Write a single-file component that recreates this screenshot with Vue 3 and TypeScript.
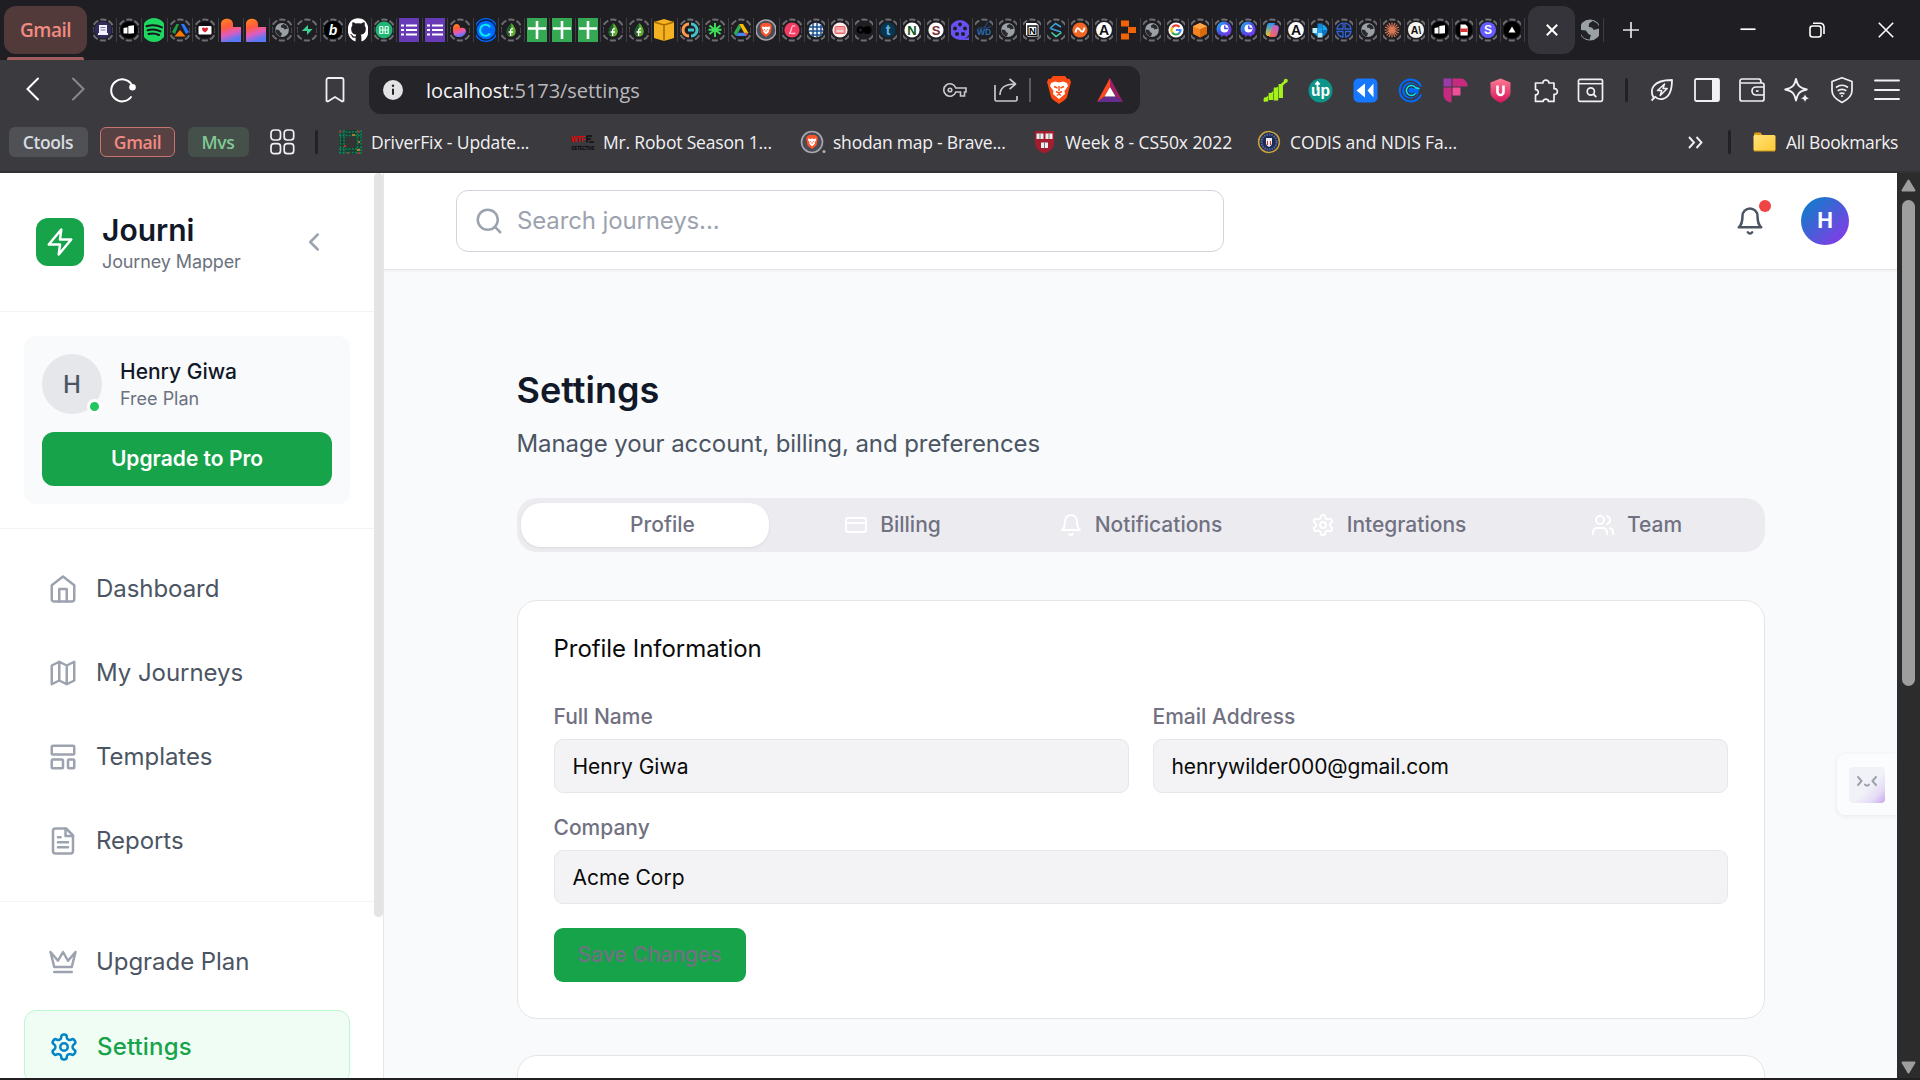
<script setup lang="ts">
interface Glyph { art: string; ring?: boolean }
interface NavItem { label: string; icon: string }
interface Bookmark { label: string; art: string; width: number; spacing: number }

const F = 'font-family="Liberation Sans, sans-serif" font-weight="700" text-anchor="middle"'
const disc = (c: string, r = 7.6) => `<circle cx="12" cy="12" r="${r}" fill="${c}"/>`
const heart = (s: string) => `<path d="${s}" fill="url(#lv)"/>`
const globe = '<circle cx="12" cy="12" r="6.900" fill="#9aa0a6"/><path d="M5.500 11.500l3.500.5 1.500 2.500 1.500.5-1 3.500c-3-.5-5.500-3-5.500-7z" fill="#2a2a2e"/><path d="M11 7.500l2.500-1.500 3 1.500 1.500 3-3.500 1-1-1.500-2.500-.5z" fill="#2a2a2e"/>'
const leaf = '<path d="M12.500 5c5 6 5 9 3 12-2 2-6 2-7 0-2-3 0-7 4-12z" fill="#5fae2e"/><path d="M12.500 5c-5 5-6 9-4 12l3 1.500z" fill="#1d5e2d"/><path d="M11.500 18v-5c0-2 1-2.500 2.500-2.300M9.500 14h4.500" stroke="#fff" stroke-width="1.300" fill="none"/>'
const sheet = '<path d="M2 0h20v24H2z" fill="#34a853"/><path d="M12 3v18M3 10.500h18" stroke="#fff" stroke-width="2.600"/>'
const list = '<path d="M2 0h20v24H2z" fill="#673ab7"/><path d="M9 7.500h11M9 12h11M9 16.500h11M4 7.500h3M4 12h3M4 16.500h3" stroke="#fff" stroke-width="2.200"/>'
const lion = '<path d="M7.500 6l1.500-1h6l1.500 1 1.300 1.500L17 14c-.5 2-3 3.500-5 5-2-1.500-4.500-3-5-5L6.200 7.500z" fill="#fb542b"/><path d="M8 8.500l2.500.5L12 8.500l1.500.5 2.500-.5.300 1.500-1.600 2.500.3 1.300L12 16.500l-2.700-2.700.3-1.300L8 10z" fill="#fff"/><path d="M10 11.300l1 .5M14 11.300l-1 .5M12 12v2" stroke="#fb542b" stroke-width=".8"/>'
const octo = '<path d="M4.500 11a7.500 7.500 0 0 1 15 0c0 3-1 4-1.500 5.500l-2 .5-1.200 2-1.800-1.500h-2L9.700 19l-1.200-2-2-.5C6 15 4.500 14 4.500 11z" fill="url(#oc)"/><circle cx="12.500" cy="10.500" r="4" fill="#fff"/><path d="M12.800 7.500v3h3" stroke="#4b49e8" stroke-width="1.400" fill="none"/>'
const letterA = disc('#fff', 7.900) + `<text x="12" y="17" font-size="14" fill="#111" ${F}>A</text>`
const windows = disc('#000', 8.500) + '<path d="M6.500 10l4-.8v6.300h-4z" fill="#fff"/><path d="M11.300 8l5.700-.8v8l-5.700.5z" fill="#fff"/>'

const wideTabs: Glyph[] = [
  { ring: true, art: disc('#302d5c', 8.500) + '<path d="M8 7h8v8h1v2H7v-2h1z" fill="#f4f2ff"/><path d="M9.500 9.500h5M9.500 12h5" stroke="#77749b"/>' },
  { ring: true, art: windows },
  { art: disc('#1ed760', 12) + '<path d="M4.500 8.200c5-1.600 11-1.100 15.500 1.200M5.500 12.200c4.500-1.300 9-.9 13 1.200M6.500 16c3.500-1 7.300-.7 10.500 1" stroke="#15181b" stroke-width="2" fill="none" stroke-linecap="round"/>' },
  { ring: true, art: '<path d="M11 6H8.500L4 14l3 2z" fill="#1e9e4a"/><path d="M13 6h3l5 8-3 2z" fill="#2979ff"/><path d="M12 12l5.500 6.500h-11z" fill="#ff7900"/>' },
  { ring: true, art: disc('#101014', 8.500) + '<rect x="5.500" y="8" width="13" height="8.500" rx="1" fill="#fff"/><path d="M12 14.500c-4-2.500-3.500-5-1.500-5 .9 0 1.500.9 1.500.9s.6-.9 1.500-.9c2 0 2.500 2.500-1.500 5z" fill="#d9232e"/>' },
  { art: heart('M2 24V6c0-7 12-7 12 0v3h8v15z') },
  { art: heart('M2 24V6c0-7 12-7 12 0v3h8v15z') },
  { ring: true, art: globe },
  { ring: true, art: '<path d="M13 7v4h4.500L12 17v-4H6.800z" fill="#3ecf8e"/>' },
  { ring: true, art: disc('#000', 9) + `<text x="12" y="17" font-size="14" font-style="italic" fill="#fff" ${F}>b</text>` },
  { art: '<path d="M12 .3C5.400.3 1.800 5.500 1.800 12c0 5.500 3 9.500 7 11.300.6.1.800-.3.800-.6v-3c-3 .7-3.700-1.300-3.700-1.300-.5-1.200-1.200-1.600-1.200-1.600-1-.7.1-.7.1-.7 1.100.1 1.700 1.200 1.700 1.200 1 1.700 2.600 1.200 3.200.9.1-.7.4-1.200.700-1.500-2.700-.3-5.200-1.400-5.200-6 0-1.300.5-2.400 1.200-3.200-.1-.3-.5-1.500.1-3.200 0 0 1-.3 3.200 1.200a11 11 0 0 1 5.600 0c2.200-1.500 3.200-1.200 3.200-1.200.6 1.700.2 2.900.1 3.200.700.8 1.200 1.900 1.200 3.200 0 4.600-2.600 5.700-5.200 6 .4.400.800 1.100.800 2.200v3.800c0 .3.200.7.800.6 4-1.800 6.300-5.800 6.300-11.300C22.200 5.500 18.600.3 12 .3z" fill="#fff"/>' },
  { ring: true, art: disc('#1fb573', 8.500) + '<path d="M7.800 8.500h3v7h-3zM13.200 8.500h3v7h-3zM8 12h8" stroke="#e8fff4" stroke-width="1.200" fill="none" stroke-linejoin="round"/>' },
  { art: list }, { art: list },
  { ring: true, art: '<path d="M6 17c-2-6-1-11 2.500-11S12 9 12 10c3-1 6 0 6 3 0 6-9 8-12 4z" fill="url(#lv)"/>' },
  { art: disc('#0069ff', 12) + '<circle cx="12" cy="12" r="10" fill="none" stroke="#061f40" stroke-width="1.300"/><path d="M16 9a5.500 5.500 0 1 0 0 6.500" stroke="#0ae8f0" stroke-width="2.200" fill="none"/>' },
  { ring: true, art: leaf },
  { art: sheet }, { art: sheet }, { art: sheet },
  { ring: true, art: leaf }, { ring: true, art: leaf },
  { art: '<path d="M2 4l10-3 10 3v16l-10 3-10-3z" fill="#f4b223"/><path d="M2 4l10 3 10-3M12 7v16" stroke="#a66b00" stroke-width="1.500" fill="none"/>' },
  { ring: true, art: '<path d="M11 6a6 6 0 0 0 0 12" stroke="#ff9b4a" stroke-width="3" fill="none"/><path d="M13 6a6 6 0 0 1 0 12M10 12h6" stroke="#42c2c9" stroke-width="3" fill="none"/>' },
  { ring: true, art: '<path d="M12 5v14M6.500 7.500L17.500 16M17.500 7.500L6.500 16M5.500 11.700h13" stroke="#3ee05c" stroke-width="1.900"/>' },
  { ring: true, art: '<path d="M10 6h4l5.500 9h-4.200z" fill="#fbbc04"/><path d="M10 6l2 3.700L7 18l-2.300-3z" fill="#34a853"/><path d="M7 18l2.200-3.300h10.300L17 18z" fill="#4285f4"/><path d="M19.500 15h-4l1.700 3z" fill="#ea4335"/>' },
  { art: '<circle cx="12" cy="12" r="10" fill="#4b4b55" stroke="#a8a8b0" stroke-width="1.500"/>' + lion },
  { ring: true, art: disc('#f43b61') + '<path d="M15 8.500c-1-2-3-.5-3.500 2s-1 4.500-2.500 5c2-.8 4 .8 6.500-.5" stroke="#ffc4cf" stroke-width="1.300" fill="none"/>' },
]

const narrowTabs: Glyph[] = [
  { ring: true, art: disc('#e9f2fb', 7.300) + '<path d="M9 5v14M13 5v14M17 7v10M5 9h14M5 13h14M7 17h11" stroke="#1c4e8a" stroke-width="1.500"/>' },
  { ring: true, art: disc('#ffecec') + '<rect x="7" y="8.500" width="10" height="7" rx="1" fill="#f69b9f" stroke="#d66"/><path d="M8.500 13h7" stroke="#fff"/>' },
  { ring: true, art: '<circle cx="8.500" cy="12" r="2.800" fill="none" stroke="#000" stroke-width="2"/><circle cx="15.500" cy="12" r="4" fill="#000"/>' },
  { ring: true, art: disc('#073852') + `<text x="12" y="17" font-size="14" fill="#6cb2dc" ${F}>t</text>` },
  { ring: true, art: disc('#fff') + `<text x="12" y="16.700" font-size="13" fill="#0c5b20" ${F}>N</text>` },
  { ring: true, art: disc('#fff') + `<text x="12" y="16.700" font-size="13" fill="#782a32" ${F}>S</text>` },
  { art: '<circle cx="12" cy="12" r="10" fill="#6651f5"/><path d="M12 22h10v-3" fill="#6651f5"/><g fill="#1f1e23"><circle cx="12" cy="6.500" r="2"/><circle cx="7" cy="10.500" r="2"/><circle cx="17" cy="10.500" r="2"/><circle cx="9" cy="16" r="2"/><circle cx="15" cy="16" r="2"/></g>' },
  { ring: true, art: '<path d="M6 10h9l4-1.500M12 10l4-6" fill="none" stroke="#1e4f86" stroke-width="1.200"/>' + `<text x="12" y="17" font-size="8.500" fill="#2a6db3" ${F}>WD</text>` },
  { ring: true, art: globe },
  { ring: true, art: '<path d="M6 5h10l2.500 2v11.500L8 19l-2-2.500z" fill="#fff"/><path d="M8 8h9v9.500H8z" fill="#fff" stroke="#111" stroke-width="1.300"/>' + `<text x="12.500" y="16.300" font-size="9.500" fill="#000" ${F}>N</text>` },
  { ring: true, art: '<path d="M6 10.500L11.500 5.500 17 9M6.500 10.500L17 14" stroke="#3ba4df" stroke-width="1.500" fill="none"/><path d="M7.500 14.500l4.500 4 5.500-4" stroke="#46d8b2" stroke-width="1.500" fill="none"/>' },
  { ring: true, art: disc('#f26522') + '<path d="M7.500 14.500c1-5 2.500-5 4.500-2.500s3.500 2.500 4.500-2.500" stroke="#fff" stroke-width="2" fill="none"/>' },
  { ring: true, art: letterA },
  { art: '<path d="M5 2.500h8v6H5zM12 9h8v6h-8zM5 15.500h8v6H5z" fill="#f26207"/>' },
  { ring: true, art: globe },
  { ring: true, art: disc('#fff') + '<g fill="none" stroke-width="2.200"><path d="M15.500 9A4.600 4.600 0 0 0 8.200 9.500" stroke="#ea4335"/><path d="M8.200 9.500a4.600 4.600 0 0 0 0 5" stroke="#fbbc04"/><path d="M8.200 14.500a4.600 4.600 0 0 0 6.800.9" stroke="#34a853"/><path d="M15 15.400A4.600 4.600 0 0 0 16.500 12H12" stroke="#4285f4"/></g>' },
  { ring: true, art: '<path d="M12 5l7 3.200v7.600L12 19.500l-7-3.700V8.200z" fill="#f58220"/><path d="M5 8.200l7 3 7-3L12 5z" fill="#ffa64a"/><path d="M12 11.200v8.300l7-3.700V8.200z" fill="#d96a0c"/>' },
  { ring: true, art: octo }, { ring: true, art: octo },
  { ring: true, art: '<path d="M9 5h6l-3 10c-.5 2-1 3-3 3-3 0-4-2-3-6s1-7 3-7z" fill="url(#cp1)"/><path d="M15 7c3 0 4.500 1 3.500 5s-1.500 7-4 7H9l3-9c.5-2 1-3 3-3z" fill="url(#cp2)"/>' },
  { ring: true, art: letterA },
  { ring: true, art: '<path d="M9.500 5.500h5V10h-5z" fill="#0f86d8"/><path d="M14.500 6.500A7.500 7.500 0 0 1 19.500 12h-5z" fill="#16a5ec"/><path d="M4.500 10h5v5h-5z" fill="#bfeeff"/><path d="M9.500 10h5v5h-5z" fill="#1a9be6"/><path d="M14.500 12h5a7.500 7.500 0 0 1-5 6.500z" fill="#0b74c9"/><path d="M9.500 15h5v4.500h-5z" fill="#a8e6fb"/><path d="M5.500 15h4v3.500z" fill="#16a5ec"/>' },
  { ring: true, art: '<path d="M11 5.200A7 7 0 0 0 5 11h6zM13 5.200A7 7 0 0 1 19 11h-6zM5 13.500a7 7 0 0 0 6 5.500v-5.500zM13.500 13.500V19a7 7 0 0 0 5.500-5.500z" fill="none" stroke="#3166db" stroke-width="1.300"/>' },
  { ring: true, art: globe },
  { ring: true, art: '<path d="M12 4.500v15M4.500 12h15M6.700 6.700l10.600 10.600M17.300 6.700L6.700 17.300M9 5l6 14M15 5L9 19M5 9l14 6M19 9L5 15" stroke="#d97757" stroke-width="1.200"/>' },
  { ring: true, art: disc('#f6f5f0', 8) + `<text x="12" y="16" font-size="10.500" fill="#111" ${F}>A\\</text>` },
  { ring: true, art: windows },
  { ring: true, art: disc('#000', 8.500) + '<path d="M8.500 6.500h5l2.200 2.200V17.500H8.500z" fill="#fff"/><path d="M8.500 10.500h7v3.500h-7z" fill="#d33"/>' },
  { ring: true, art: disc('#635bff', 8) + `<text x="12" y="16.300" font-size="12" fill="#fff" ${F}>S</text>` },
  { ring: true, art: disc('#000', 8.500) + '<path d="M12 8.500l3.500 6h-7z" fill="#fff"/>' },
]

const extensions: string[] = [
  '<g stroke="#a6f21b" stroke-width="4.300"><path d="M2.500 19v4M7.500 14.500v7M12.500 9v13M17.300 5.500v14"/></g><path d="M.5 22.500l22-20" stroke="#a6f21b" stroke-width="2.400"/><circle cx="22.300" cy="2.200" r="2" fill="#a6f21b"/><path d="M5 14v8M10 10v12M15 7v13" stroke="#5a8c1c" stroke-width=".8"/>',
  `<circle cx="12" cy="12" r="12" fill="#0d9488"/><text x="12" y="17" font-size="16" textLength="19" lengthAdjust="spacingAndGlyphs" fill="#fff" ${F}>up</text><path d="M9 12V4M6.800 6L9 3.500 11.200 6" stroke="#fff" stroke-width="1.800" fill="none"/>`,
  '<rect width="24" height="24" rx="5" fill="#1677ff"/><path d="M11.500 5v14L3 12zM20 5v14l-6-7z" fill="#fff"/>',
  '<path d="M22.500 8A11 11 0 1 0 22.500 16" fill="none" stroke="#006bff" stroke-width="2"/><circle cx="12" cy="12" r="8.300" fill="#006bff"/><path d="M17 9.200a5 5 0 1 0 0 5.600" stroke="#30323a" stroke-width="4" fill="none"/><path d="M17 9.200a5 5 0 1 0 0 5.600M17 9.200l4 1" stroke="#0ae8f0" stroke-width="1.500" fill="none"/>',
  '<path d="M0 0h8v8H0z" fill="#9b3aa8"/><path d="M9 0h8a7 7 0 0 1 7 8H9z" fill="#c72b80"/><path d="M0 9h8v15a8 8 0 0 1-8-7z" fill="#c72b80"/><path d="M9 9h8v8H9z" fill="#f04e97"/>',
  '<path d="M12 0l10 4v10c0 5-5 8-10 10.500C7 22 2 19 2 14V4z" fill="url(#ub)"/><path d="M9 7v6.500a3 3 0 0 0 6 0V7" stroke="#fff" stroke-width="2.600" fill="none"/>',
  '<path d="M3.500 4.500h6c-.8-3.800 6.500-3.800 5.800 0h5.200v5.700c4.500-.8 4.500 6.300 0 5.700v7H15c.3-3-5.600-3-5.300 0H2v-6.500c3.700.3 3.700-5.600 0-5.300v-6.600z" stroke="#f1f1f3" stroke-width="1.700" fill="none" stroke-linejoin="round"/>',
  '<rect x="0" y=".8" width="24" height="22" rx="1.500" stroke="#f1f1f3" stroke-width="1.700" fill="none"/><path d="M0 5.200h24" stroke="#f1f1f3" stroke-width="1.500"/><circle cx="12.300" cy="13" r="3.600" fill="none" stroke="#f1f1f3" stroke-width="1.700"/><path d="M15 15.700l2.800 3" stroke="#f1f1f3" stroke-width="1.800"/>',
]

const tools: string[] = [
  '<path d="M3.500 19.500C-.5 12 2 2 22 2c0 8-1 17-9.500 19-3.500.6-6-.5-7.300-2.200L1.500 22.500" fill="none" stroke="#f1f1f3" stroke-width="1.800" stroke-linejoin="round"/><path d="M14.500 6L7.500 12.500h4.200l-1.500 5 7-7H13z" fill="none" stroke="#f1f1f3" stroke-width="1.500" stroke-linejoin="round"/>',
  '<rect x="0" y="1" width="24" height="22" rx="1.500" fill="none" stroke="#f1f1f3" stroke-width="1.800"/><path d="M17 1h7v22h-7z" fill="#f1f1f3"/>',
  '<path d="M0 4V21a2 2 0 0 0 2 2h20a2 2 0 0 0 2-2V7a2 2 0 0 0-2-2H1M0 5V3a2 2 0 0 1 2-2h17c1.500 0 2 1 2 3.500M24 9h-8a4 4 0 0 0 0 8h8z" fill="none" stroke="#f1f1f3" stroke-width="1.700"/><path d="M16 13h2.500" stroke="#f1f1f3" stroke-width="1.700"/>',
  '<path d="M11 .8c1.500 7 3.500 9 10.800 10.700C14.500 13 12.500 15.500 11 22.500 9.500 15.500 7.500 13 .2 11.500 7.500 9.800 9.500 7.800 11 .8z" fill="none" stroke="#f1f1f3" stroke-width="1.800" stroke-linejoin="round"/><path d="M20 15l1.500 3.700 3.700 1.500-3.700 1.500L20 25.300l-1.500-3.600-3.700-1.500 3.700-1.500z" fill="#f1f1f3" stroke="#3b3a3f"/>',
  '<path d="M12-.3l10 3.800v9c0 6-5 9.500-10 12-5-2.500-10-6-10-12v-9z" fill="none" stroke="#f1f1f3" stroke-width="1.700" stroke-linejoin="round"/><path d="M6 9.500c4-3 8-3 12 0M7.700 12.800c3-2 5.700-2 8.600 0M9.500 15.800c2-1.200 3-1.200 5 0" fill="none" stroke="#f1f1f3" stroke-width="1.700"/><circle cx="12" cy="18" r="1" fill="#f1f1f3"/>',
  '<path d="M0 2.500h24M0 12h24M0 21h24" stroke="#f1f1f3" stroke-width="1.900" stroke-linecap="round"/>',
]

const bookmarks: Bookmark[] = [
  { label: 'DriverFix - Update...', width: 232, spacing: -0.13, art: '<rect width="23" height="24" fill="#1d3a30"/><path d="M1.500 0v24M5 0v24M18.500 0v24M22 0v24M0 2h23M0 5.500h23M0 19h23M0 22.500h23" stroke="#12825a" stroke-width="1.500" stroke-dasharray="2 1.200"/><rect x="6.500" y="7" width="10.500" height="10.500" fill="#323434"/><path d="M0 1.500h2.500M18 1.500h2.500M5 16h2M8 23h2M19 23h2" stroke="#b2342f" stroke-width="2"/><path d="M13 5h3M19 12h2M18 20h3" stroke="#b57a2a" stroke-width="2"/>' },
  { label: 'Mr. Robot Season 1...', width: 230, spacing: -0.17, art: `<text x="7" y="12" font-size="9.500" textLength="14" lengthAdjust="spacingAndGlyphs" fill="#e00" ${F}>WTF</text><path d="M16 6h5M16 9h4M18 12h5M16 5.500v7" stroke="#111" stroke-width="1.500"/><text x="12" y="19.500" font-size="6" textLength="23" lengthAdjust="spacingAndGlyphs" fill="#080808" ${F}>DETECTIVE</text>` },
  { label: 'shodan map - Brave...', width: 232, spacing: -0.22, art: '<circle cx="11" cy="12" r="10.500" fill="#4b4b55" stroke="#a8a8b0" stroke-width="1.600"/><g transform="translate(-1 0)">' + lion + '</g><circle cx="23" cy="21.500" r="1.500" fill="#b0b0b5"/>' },
  { label: 'Week 8 - CS50x 2022', width: 225, spacing: -0.08, art: '<path d="M2 1h19v12c0 5-4 8-9.500 10.500C6 21 2 18 2 13z" fill="#a51c30"/><path d="M3.500 3.500h7v5.500h-7zM12.500 3.500h7v5.500h-7zM8 12.500h7v5.500H8z" fill="#eee"/><path d="M7 3.500v5.500M16 3.500v5.500M11.500 12.500v5.500" stroke="#777"/>' },
  { label: 'CODIS and NDIS Fa...', width: 420, spacing: -0.13, art: '<circle cx="11" cy="12" r="10.400" fill="#1c2a55" stroke="#c9a13a" stroke-width="1.500"/><circle cx="11" cy="12" r="7.500" fill="none" stroke="#5a6a92" stroke-width="2" stroke-dasharray="1.500 1"/><path d="M8 8h6v5c0 2-1.500 3-3 4-1.500-1-3-2-3-4z" fill="#eee"/><path d="M9.500 11v4M12.500 11v4" stroke="#c33"/>' },
]

const bell = '<path d="M6 8a6 6 0 0 1 12 0c0 7 3 9 3 9H3s3-2 3-9"/><path d="M10.300 21a1.940 1.940 0 0 0 3.400 0"/>'
const gear = '<path d="M12.220 2h-.44a2 2 0 0 0-2 2v.18a2 2 0 0 1-1 1.730l-.43.25a2 2 0 0 1-2 0l-.15-.08a2 2 0 0 0-2.730.73l-.22.38a2 2 0 0 0 .73 2.730l.15.1a2 2 0 0 1 1 1.720v.51a2 2 0 0 1-1 1.740l-.15.09a2 2 0 0 0-.73 2.730l.22.38a2 2 0 0 0 2.730.73l.15-.08a2 2 0 0 1 2 0l.43.25a2 2 0 0 1 1 1.730V20a2 2 0 0 0 2 2h.44a2 2 0 0 0 2-2v-.18a2 2 0 0 1 1-1.730l.43-.25a2 2 0 0 1 2 0l.15.08a2 2 0 0 0 2.730-.73l.22-.39a2 2 0 0 0-.73-2.730l-.15-.08a2 2 0 0 1-1-1.740v-.5a2 2 0 0 1 1-1.740l.15-.09a2 2 0 0 0 .73-2.730l-.22-.38a2 2 0 0 0-2.730-.73l-.15.08a2 2 0 0 1-2 0l-.43-.25a2 2 0 0 1-1-1.730V4a2 2 0 0 0-2-2z"/><circle cx="12" cy="12" r="3"/>'

const navMain: NavItem[] = [
  { label: 'Dashboard', icon: '<path d="m3 9 9-7 9 7v11a2 2 0 0 1-2 2H5a2 2 0 0 1-2-2z"/><path d="M9 22V12h6v10"/>' },
  { label: 'My Journeys', icon: '<path d="M3 6l6-3 6 3 6-3v15l-6 3-6-3-6 3zM9 3v15M15 6v15"/>' },
  { label: 'Templates', icon: '<rect x="3" y="3" width="18" height="7" rx="1"/><rect x="3" y="14" width="9" height="7" rx="1"/><rect x="16" y="14" width="5" height="7" rx="1"/>' },
  { label: 'Reports', icon: '<path d="M14.500 2H6a2 2 0 0 0-2 2v16a2 2 0 0 0 2 2h12a2 2 0 0 0 2-2V7.500L14.500 2z"/><path d="M14 2v6h6M16 13H8M16 17H8M10 9H8"/>' },
]
const crown = '<path d="m2 4 3 12h14l3-12-6 7-4-7-4 7-6-7zm3 16h14"/>'

const tabs: NavItem[] = [
  { label: 'Profile', icon: '<circle cx="12" cy="7" r="4"/><path d="M19 21v-2a4 4 0 0 0-4-4H9a4 4 0 0 0-4 4v2"/>' },
  { label: 'Billing', icon: '<rect x="2" y="5" width="20" height="14" rx="2"/><path d="M2 10h20"/>' },
  { label: 'Notifications', icon: bell },
  { label: 'Integrations', icon: gear },
  { label: 'Team', icon: '<path d="M16 21v-2a4 4 0 0 0-4-4H6a4 4 0 0 0-4 4v2"/><circle cx="9" cy="7" r="4"/><path d="M22 21v-2a4 4 0 0 0-3-3.870M16 3.130a4 4 0 0 1 0 7.750"/>' },
]
const activeTab = 'Profile'
const ringArt = '<circle cx="12" cy="12" r="10.600" fill="none" stroke="#6d6d71" stroke-width="2" stroke-dasharray="6.100 2.225" stroke-dashoffset="3"/>'
const art = (g: Glyph): string => (g.ring ? ringArt : '') + g.art
</script>

<template>
  <div class="window">
    <svg class="defs" width="0" height="0">
      <defs>
        <linearGradient id="lv" x1="0" y1="0" x2=".3" y2="1"><stop offset="0" stop-color="#ff8a1f" /><stop offset=".4" stop-color="#ff5a3c" /><stop offset=".7" stop-color="#e35bbd" /><stop offset="1" stop-color="#5a78f5" /></linearGradient>
        <linearGradient id="oc" x1="0" y1="0" x2="1" y2="1"><stop offset="0" stop-color="#18c5f5" /><stop offset=".5" stop-color="#4b49e8" /><stop offset="1" stop-color="#8a3cf0" /></linearGradient>
        <linearGradient id="cp1" x1="0" y1="0" x2="0" y2="1"><stop offset="0" stop-color="#1e90ff" /><stop offset="1" stop-color="#e8c42c" /></linearGradient>
        <linearGradient id="cp2" x1="1" y1="0" x2="0" y2="1"><stop offset="0" stop-color="#b25cf0" /><stop offset="1" stop-color="#ff6d3a" /></linearGradient>
        <linearGradient id="ub" x1="0" y1="0" x2="0" y2="1"><stop offset="0" stop-color="#ff7a93" /><stop offset="1" stop-color="#d4145a" /></linearGradient>
        <linearGradient id="fd" x1="0" y1="0" x2="1" y2="1"><stop offset="0" stop-color="#ffe27a" /><stop offset="1" stop-color="#ffc933" /></linearGradient>
      </defs>
    </svg>

    <header class="tabstrip">
      <div class="group"><span class="group-chip">Gmail</span><i class="group-line"></i></div>
      <div class="favs wide">
        <span v-for="(g, i) in wideTabs" :key="i" class="fav"><span class="clip"><svg viewBox="0 0 24 24" v-html="art(g)" /></span></span>
      </div>
      <div class="favs narrow">
        <span v-for="(g, i) in narrowTabs" :key="i" class="fav"><span class="clip"><svg viewBox="0 0 24 24" v-html="art(g)" /></span></span>
      </div>
      <div class="current"><svg viewBox="0 0 12 12" width="12" height="12"><path d="M.8.800l10.400 10.400M11.200.800L.800 11.200" stroke="#fff" stroke-width="2" /></svg></div>
      <span class="last-tab"><span class="globe"><svg viewBox="0 0 24 24" width="22" height="22"><circle cx="12" cy="12" r="11.500" fill="#9aa0a6" /><path d="M1.500 12l6 .5 3 4 2.500 1-1.500 5C5 22 1 18 1.500 12z" fill="#232327" /><path d="M11 5l4-3 5 3 3 5-7 2-1.500-2.500-4-1z" fill="#232327" /></svg></span></span>
      <svg class="plus" viewBox="0 0 16 16" width="16" height="16"><path d="M8 0v16M0 8h16" stroke="#e4e4e6" stroke-width="1.700" /></svg>
      <div class="win-controls">
        <svg viewBox="0 0 16 16" width="16" height="16"><path d="M.5 7.200h15" stroke="#fff" stroke-width="1.700" /></svg>
        <svg viewBox="0 0 16 16" width="16" height="16"><rect x="1" y="4" width="11" height="11" rx="2.500" fill="none" stroke="#fff" stroke-width="1.600" /><path d="M4 1.300h7.500A3.500 3.500 0 0 1 15 4.800V12" fill="none" stroke="#fff" stroke-width="1.600" /></svg>
        <svg viewBox="0 0 16 16" width="16" height="16"><path d="M.8.800l14.400 14.400M15.200.800L.800 15.200" stroke="#fff" stroke-width="1.600" /></svg>
      </div>
    </header>

    <div class="toolbar">
      <div class="nav-buttons">
        <span><svg width="24" height="24" viewBox="0 0 24 24"><path d="M17 1.500L6.500 12 17 22.500" fill="none" stroke="#fff" stroke-width="2" stroke-linecap="round" /></svg></span>
        <span><svg width="24" height="24" viewBox="0 0 24 24"><path d="M7 1.500L17.500 12 7 22.500" fill="none" stroke="#8a898d" stroke-width="2" stroke-linecap="round" /></svg></span>
        <span><svg width="26" height="26" viewBox="0 0 26 26"><path d="M21.500 7.500A11 11 0 1 0 21 20" fill="none" stroke="#fff" stroke-width="2" stroke-linecap="round" /><circle cx="22.500" cy="10.300" r="3.300" fill="#fff" /></svg></span>
      </div>
      <svg class="save" width="20" height="26" viewBox="0 0 20 26"><path d="M1.500 3a2 2 0 0 1 2-2h13a2 2 0 0 1 2 2v21l-1.300.5L10 20l-7.200 4.500L1.500 24z" fill="none" stroke="#f1f1f3" stroke-width="1.800" /></svg>
      <div class="address">
        <svg class="info" width="20" height="20" viewBox="0 0 20 20"><circle cx="10" cy="10" r="10" fill="#e3e3e6" /><path d="M10 8.800v6" stroke="#252429" stroke-width="2" /><circle cx="10" cy="5.800" r="1.200" fill="#252429" /></svg>
        <span class="url"><b>localhost</b>:5173/settings</span>
        <svg class="key" width="24" height="16" viewBox="0 0 24 16"><g fill="none" stroke="#c9c9cc" stroke-width="1.600"><path d="M12.800 6H23v4h-1.500v4h-4v-4h-4.700A6.200 6.200 0 1 1 12.800 6z" /><circle cx="7" cy="8" r="1.800" /></g></svg>
        <svg class="share" width="24" height="24" viewBox="0 0 24 24"><path d="M1 7v14.500a1.500 1.500 0 0 0 1.500 1.500h19a1.500 1.500 0 0 0 1.500-1.500V18M6 17c0-7 5-11 15-11M15.500.800L21.500 6l-6 5.200" fill="none" stroke="#c9c9cc" stroke-width="1.700" stroke-linejoin="round" /></svg>
        <i class="bar"></i>
        <svg class="lion" width="24" height="28" viewBox="0 0 24 28"><path d="M6 0h12l2.500 3 2-.3L24 6l-1 3.500-3 11.500c-1 3-5 4.500-8 7-3-2.500-7-4-8-7L1 9.500 0 6l1.500-3.300 2 .3z" fill="#fb4b12" /><path d="M4 7l4-1.500 4 1 4-1L20 7l1 3-3.500 5 .5 3-6 5-6-5 .5-3L3 10z" fill="#fff" /><path d="M7 10.500l3.500 1.500M17 10.500L13.500 12M12 10v5M9 15.500l3 1.500 3-1.500M10 19.500l2-1.500 2 1.500" stroke="#fb4b12" stroke-width="1.400" fill="none" /></svg>
        <svg class="bat" width="28" height="24" viewBox="0 0 28 24"><path d="M14 0v9L8.500 18.500 1 24z" fill="#ff4724" /><path d="M14 0l13 24-7.500-5.500L14 9z" fill="#9e1f63" /><path d="M1 24l7.500-5.500h11L27 24z" fill="#662d91" /><path d="M14 9l5.500 9.500h-11z" fill="#fff" /></svg>
      </div>
      <div class="ext">
        <span v-for="(e, i) in extensions" :key="i"><svg width="25" height="25" viewBox="-.5 -.5 25 25" v-html="e" /></span>
        <i class="sep"></i>
        <span v-for="(e, i) in tools" :key="'t' + i"><svg width="26" height="26" viewBox="-1 -1 26 26" v-html="e" /></span>
      </div>
    </div>

    <nav class="bookmarks">
      <span class="chip ctools">Ctools</span>
      <span class="chip gmail">Gmail</span>
      <span class="chip mvs">Mvs</span>
      <svg class="grid-icon" width="25" height="26" viewBox="0 0 25 26"><g fill="none" stroke="#f1f1f3" stroke-width="1.700"><rect x="1" y="1" width="9.500" height="10" rx="3" /><rect x="14.200" y="1" width="9.500" height="10" rx="3" /><rect x="1" y="14.700" width="9.500" height="10" rx="3" /><rect x="14.200" y="14.700" width="9.500" height="10" rx="3" /></g></svg>
      <i class="sep first"></i>
      <span v-for="b in bookmarks" :key="b.label" class="mark" :style="{ width: b.width + 'px', letterSpacing: b.spacing + 'px' }">
        <svg width="24" height="24" viewBox="0 0 24 24" v-html="b.art" />{{ b.label }}
      </span>
      <svg class="more" width="15" height="13" viewBox="0 0 15 13"><path d="M1 1l5 5.500L1 12M8.500 1l5 5.500-5 5.500" fill="none" stroke="#f1f1f3" stroke-width="1.900" /></svg>
      <i class="sep second"></i>
      <span class="all"><svg width="23" height="20" viewBox="0 0 23 20"><path d="M1 4V2a1.500 1.500 0 0 1 1.500-1.500h5L9.500 3v3H1z" fill="#e09b13" /><rect x=".5" y="3" width="22" height="16" rx="1.500" fill="url(#fd)" /><path d="M1 19h21" stroke="#c99618" /></svg>All Bookmarks</span>
    </nav>

    <div class="page">
      <aside class="sidebar">
        <div class="side-scroll">
          <div class="brand">
            <span class="logo"><svg class="ic" width="30" height="30" viewBox="0 0 24 24"><path d="M13 2L3 14h9l-1 8 10-12h-9l1-8z" /></svg></span>
            <div class="brand-text"><strong>Journi</strong><span>Journey Mapper</span></div>
            <svg class="ic collapse" width="30" height="30" viewBox="0 0 24 24"><path d="m15 18-6-6 6-6" /></svg>
          </div>
          <div class="account">
            <div class="account-card">
              <div class="who">
                <span class="avatar">H<i></i></span>
                <div><strong>Henry Giwa</strong><span>Free Plan</span></div>
              </div>
              <button class="upgrade">Upgrade to Pro</button>
            </div>
          </div>
          <div class="nav-list">
            <a v-for="n in navMain" :key="n.label" class="nav-item"><svg class="ic" width="30" height="30" viewBox="0 0 24 24" v-html="n.icon" /><span>{{ n.label }}</span></a>
          </div>
          <div class="nav-list lower">
            <a class="nav-item"><svg class="ic" width="30" height="30" viewBox="0 0 24 24" v-html="crown" /><span>Upgrade Plan</span></a>
            <a class="nav-item active"><svg class="ic" width="30" height="30" viewBox="0 0 24 24" v-html="gear" /><span>Settings</span></a>
          </div>
        </div>
        <i class="side-thumb"></i>
      </aside>

      <div class="main">
        <div class="topbar">
          <div class="search"><svg class="ic" width="30" height="30" viewBox="0 0 24 24"><circle cx="11" cy="11" r="8" /><path d="m21 21-4.300-4.300" /></svg><span>Search journeys...</span></div>
          <div class="top-right">
            <span class="alerts"><svg class="ic" width="30" height="30" viewBox="0 0 24 24" v-html="bell" /><i></i></span>
            <span class="me">H</span>
          </div>
        </div>
        <main class="content">
          <h1>Settings</h1>
          <p class="lead">Manage your account, billing, and preferences</p>
          <div class="tabs">
            <span v-for="t in tabs" :key="t.label" :class="['tab', { on: t.label === activeTab }]"><svg class="ic" width="24" height="24" viewBox="0 0 24 24" v-html="t.icon" /><span>{{ t.label }}</span></span>
          </div>
          <section class="card">
            <h2>Profile Information</h2>
            <div class="fields">
              <label>Full Name<span class="input">Henry Giwa</span></label>
              <label>Email Address<span class="input email">henrywilder000@gmail.com</span></label>
              <label class="full">Company<span class="input">Acme Corp</span></label>
            </div>
            <button class="submit">Save Changes</button>
          </section>
          <section class="card next"></section>
        </main>
        <div class="buddy"><svg width="36" height="36" viewBox="0 0 36 36"><g fill="none" stroke="#9ca1ac" stroke-width="2" stroke-linecap="round"><path d="M9 10l3.500 4L9 18M27 10l-3.500 4 3.500 4" /><path d="M16 17.500c1 1.500 3 1.500 4 0" /></g></svg></div>
      </div>

      <div class="scrollbar">
        <svg width="15" height="13" viewBox="0 0 15 13"><path d="M7.500 1.500L13.500 11.500h-12z" fill="#9e9e9e" stroke="#9e9e9e" stroke-width="2" stroke-linejoin="round" /></svg>
        <i></i>
        <svg class="down" width="15" height="13" viewBox="0 0 15 13"><path d="M7.500 11.500L13.500 1.500h-12z" fill="#9e9e9e" stroke="#9e9e9e" stroke-width="2" stroke-linejoin="round" /></svg>
      </div>
    </div>
    <div class="bottom-edge"></div>
  </div>
</template>

<style>
body { margin: 0; overflow: hidden; }
</style>

<style scoped>
* { box-sizing: border-box; }
svg { display: block; flex: none; overflow: visible; }
i { display: block; flex: none; }
.window { width: 1920px; height: 1080px; overflow: hidden; display: flex; flex-direction: column; background: #3b3a3f; font-family: "Open Sans", "Noto Sans", sans-serif; color: #f1f1f3; }
.defs { position: absolute; }

.tabstrip { height: 60px; flex: none; display: flex; align-items: center; background: #1f1e23; }
.group { width: 88px; height: 60px; padding: 6px 0 0 4px; display: flex; flex-direction: column; flex: none; }
.group-chip { height: 48px; width: 83px; padding-bottom: 0; border-radius: 12px; background: #523a3a; color: #f28b82; font-size: 19px; font-weight: 600; letter-spacing: -.5px; display: flex; align-items: center; justify-content: center; }
.group-line { width: 77px; height: 3px; margin: 3px 0 0 3px; background: #a35f5e; border-radius: 2px 2px 0 0; }
.favs { display: flex; flex: none; }
.wide { margin-left: 3px; }
.fav { display: flex; flex: none; height: 24px; padding-left: 2px; border-right: 1px solid #3e3d42; }
.wide .fav { width: 25.5px; }
.narrow .fav { width: 24px; }
.clip { width: 20px; height: 24px; overflow: hidden; display: flex; justify-content: center; }
.narrow .clip { width: 18px; }
.clip svg { width: 24px; height: 24px; }
.current { width: 47px; height: 48px; margin-left: 3px; border-radius: 12px; background: #35343a; display: flex; align-items: center; justify-content: center; flex: none; }
.last-tab { width: 29px; height: 24px; padding-left: 6px; display: flex; align-items: center; border-right: 1px solid #3e3d42; flex: none; }
.globe { width: 18px; height: 22px; overflow: hidden; display: flex; justify-content: center; }
.plus { margin-left: 19px; }
.win-controls { display: flex; gap: 53px; margin-left: auto; padding-right: 26px; }

.toolbar { height: 60px; flex: none; display: flex; align-items: center; }
.nav-buttons { display: flex; margin-left: 10px; }
.nav-buttons span { width: 45px; display: flex; justify-content: center; }
.save { margin-left: 180px; }
.address { width: 771px; height: 48px; margin-left: 24px; background: #252429; border-radius: 12px; display: flex; align-items: center; flex: none; }
.info { margin-left: 14px; }
.url { width: 517px; margin-left: 23px; font-size: 20px; color: #b9b9bd; letter-spacing: -.05px; white-space: nowrap; }
.url b { color: #f6f6f7; font-weight: 400; }
.share { margin-left: 27px; }
.bar { width: 2px; height: 24px; margin-left: 11px; background: #5d5c61; }
.lion { margin-left: 16px; }
.bat { margin-left: 25px; }
.ext { margin-left: 112.5px; display: flex; align-items: center; }
.ext span { width: 45px; display: flex; justify-content: center; }
.sep { width: 3px; height: 24px; background: #222126; border-radius: 2px; }
.ext .sep { margin: 0 12px; }

.bookmarks { height: 53px; flex: none; display: flex; align-items: center; padding: 0 0 7px 9px; border-bottom: 2px solid #323136; font-size: 17.5px; white-space: nowrap; }
.chip { height: 30px; border-radius: 6px; display: flex; align-items: center; justify-content: center; font-weight: 600; letter-spacing: -.4px; flex: none; }
.ctools { width: 79px; background: #4f5155; color: #dadce0; padding-right: 1px; }
.gmail { width: 75px; margin-left: 12px; background: #574143; border: 1px solid #c77470; color: #f28b82; }
.mvs { width: 61px; margin-left: 13px; padding-right: 1px; background: #445049; color: #81c995; }
.grid-icon { margin-left: 21px; }
.first { margin-left: 20px; }
.mark { display: flex; align-items: center; gap: 8px; flex: none; }
.first + .mark { margin-left: 21px; }
.more { margin-left: 10px; }
.second { margin-left: 25px; }
.all { display: flex; align-items: center; gap: 10px; margin-left: 22px; letter-spacing: -.35px; }

.page { flex: 1; min-height: 0; display: flex; background: #f9fafb; font-family: "Inter", "Liberation Sans", sans-serif; color: #0a0a0a; overflow: hidden; }
.bottom-edge { height: 2px; flex: none; background: #211f22; }
.ic { fill: none; stroke: currentColor; stroke-width: 2; stroke-linecap: round; stroke-linejoin: round; }

.sidebar { width: 384px; flex: none; background: #fff; border-right: 1px solid #e5e7eb; display: flex; overflow: hidden; }
.side-scroll { width: 374px; flex: none; }
.side-thumb { width: 9px; height: 744px; background: #e4e4e4; border-radius: 5px; }
.brand { height: 139px; padding: 0 45px 0 36px; display: flex; align-items: center; border-bottom: 1px solid #f3f4f6; }
.logo { width: 48px; height: 48px; border-radius: 12px; background: #16a34a; color: #fff; display: flex; align-items: center; justify-content: center; }
.brand-text { margin-left: 18px; padding-top: 4px; display: flex; flex-direction: column; }
.brand-text strong { font-size: 30px; line-height: 36px; font-weight: 600; color: #111827; }
.brand-text span { font-size: 18px; line-height: 28px; letter-spacing: -.12px; color: #6b7280; }
.collapse { margin-left: auto; color: #9ca3af; }
.account { height: 217px; padding: 24px; border-bottom: 1px solid #f3f4f6; }
.account-card { height: 168px; padding: 18px; border-radius: 12px; background: #f9fafb; }
.who { display: flex; align-items: center; gap: 18px; }
.avatar { width: 60px; height: 60px; border-radius: 50%; background: #e5e7eb; color: #4b5563; font-size: 24px; font-weight: 500; display: flex; align-items: center; justify-content: center; position: relative; }
.avatar i { position: absolute; right: 0; bottom: 0; width: 15px; height: 15px; border-radius: 50%; background: #22c55e; border: 3px solid #fff; }
.who div { padding-top: 2px; display: flex; flex-direction: column; }
.who strong { font-size: 21px; line-height: 27px; font-weight: 500; color: #111827; }
.who div span { font-size: 18px; line-height: 27px; color: #6b7280; }
.upgrade { width: 290px; height: 54px; margin: 18px 0 0; padding: 0 0 2px; border: 0; border-radius: 12px; background: #16a34a; color: #fff; font: 600 21px "Inter", sans-serif; display: block; }
.nav-list { padding: 24px; display: flex; flex-direction: column; gap: 12px; }
.lower { border-top: 1px solid #f3f4f6; }
.nav-item { height: 72px; padding: 0 24px; display: flex; align-items: center; gap: 18px; font-size: 24px; letter-spacing: -.05px; color: #4b5563; border-radius: 12px; }
.nav-item span { padding-bottom: 2px; }
.nav-item svg { color: #9ca3af; }
.nav-item.active { height: 74px; border: 1px solid #bbf7d0; background: #f0fdf4; color: #16a34a; font-weight: 500; letter-spacing: .15px; }
.nav-item.active svg { color: #0284c7; }

.main { flex: 1; min-width: 0; display: flex; flex-direction: column; position: relative; overflow: hidden; }
.topbar { height: 97px; flex: none; padding: 0 48px 0 72px; display: flex; align-items: center; justify-content: space-between; background: #fff; border-bottom: 1px solid #e5e7eb; box-shadow: 0 1px 3px rgba(0, 0, 0, .06); }
.search { width: 768px; height: 62px; padding-left: 17px; display: flex; align-items: center; gap: 13px; border: 1px solid #d1d5db; border-radius: 12px; font-size: 24px; letter-spacing: -.13px; color: #9ca3af; }
.search span { padding-bottom: 2px; }
.top-right { display: flex; align-items: center; gap: 36px; }
.alerts { position: relative; color: #4b5563; }
.alerts i { position: absolute; left: 24px; top: -6px; width: 12px; height: 12px; border-radius: 50%; background: #ef4444; }
.me { width: 48px; height: 48px; padding-bottom: 1px; border-radius: 50%; background: linear-gradient(135deg, #0284c7, #9333ea); color: #fff; font-size: 21px; font-weight: 700; display: flex; align-items: center; justify-content: center; }
.content { width: 1248px; margin: 96px 0 0 132.5px; }
h1 { margin: 0; font-size: 36px; line-height: 48px; font-weight: 600; color: #111827; }
.lead { margin: 12px 0 0; font-size: 24px; line-height: 36px; letter-spacing: -.08px; color: #4b5563; }
.tabs { height: 54px; margin-top: 36px; padding: 4px; display: flex; align-items: center; border-radius: 20px; background: #ececf0; }
.tab { flex: 1; height: 44px; display: flex; align-items: center; justify-content: center; gap: 12px; font-size: 21px; font-weight: 500; color: #717182; border-radius: 20px; }
.tab > span { padding-bottom: 1px; }
.tab svg { color: #fff; }
.tab.on { background: #fff; box-shadow: 0 1px 3px rgba(0, 0, 0, .08); }
.card { height: 419px; margin-top: 48px; padding: 35px 36px; background: #fff; border: 1px solid #e5e5e7; border-radius: 20px; }
.card.next { margin-top: 36px; height: 60px; }
h2 { margin: 0; font-size: 24px; line-height: 26px; font-weight: 400; letter-spacing: -.04px; color: #0a0a0a; }
.fields { margin-top: 44px; display: grid; grid-template-columns: 1fr 1fr; column-gap: 24px; row-gap: 24px; }
label { display: flex; flex-direction: column; gap: 12px; font-size: 21px; line-height: 21px; font-weight: 500; color: #717182; }
.full { grid-column: 1 / -1; }
.input { height: 54px; padding: 0 18px; display: flex; align-items: center; border: 1px solid #e5e7eb; border-radius: 9px; background: #f3f3f5; font-weight: 400; color: #0a0a0a; }
.email { letter-spacing: -.1px; }
.submit { width: 192px; height: 54px; margin-top: 24px; padding: 0 0 1px; border: 0; border-radius: 9px; background: #16a34a; color: #717182; font: 500 21px "Inter", sans-serif; display: block; }
.buddy { position: absolute; right: 0; top: 581px; width: 60px; height: 61px; padding: 13px 12px; border-radius: 8px 0 0 8px; background: #fbfcfd; box-shadow: 0 1px 5px rgba(0, 0, 0, .08); }
.buddy svg { border-radius: 4px; background: linear-gradient(135deg, #f0f2f8 55%, #e5dcf5 78%, #c9a5ea); }

.scrollbar { width: 23px; flex: none; padding: 6px 0 4px; background: #2c2c2c; display: flex; flex-direction: column; align-items: center; }
.scrollbar i { width: 13px; height: 486px; margin-top: 8px; border-radius: 7px; background: #9e9e9e; }
.scrollbar .down { margin-top: auto; }
</style>
